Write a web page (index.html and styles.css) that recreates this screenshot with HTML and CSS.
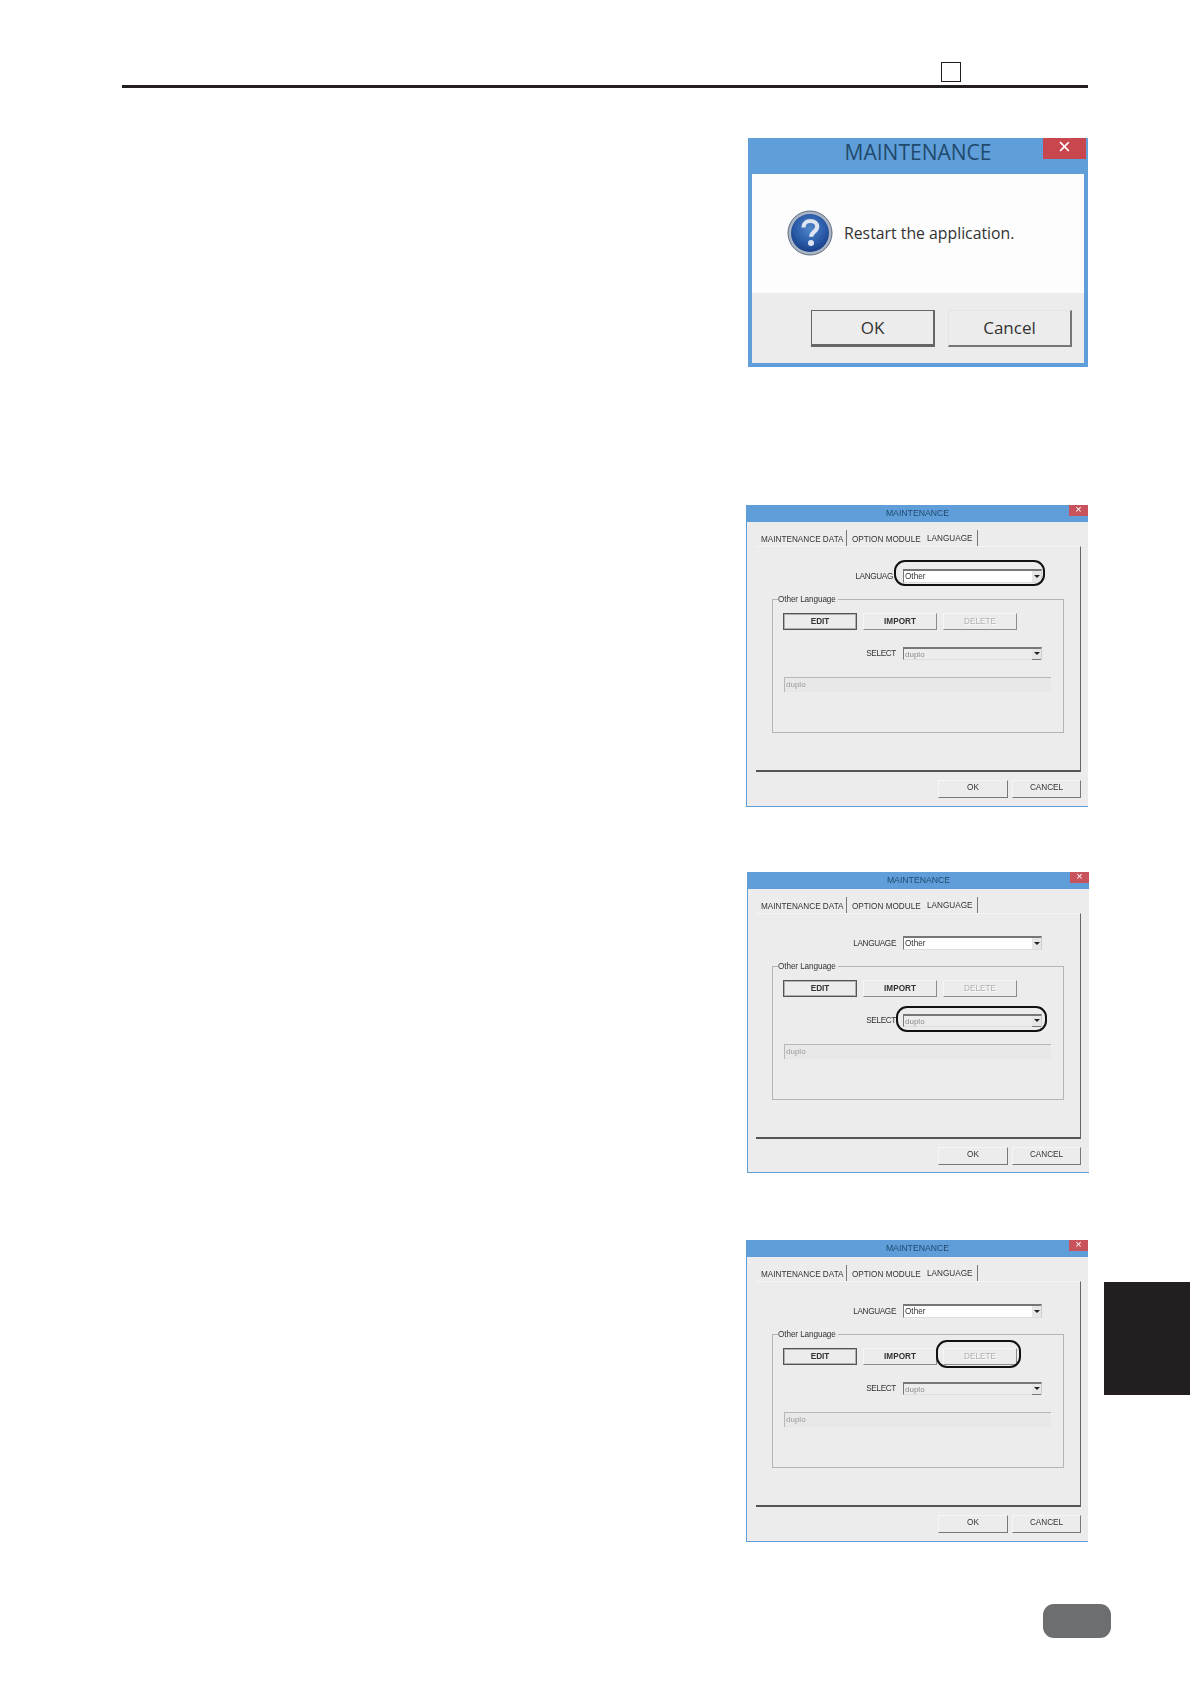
FILE: index.html
```html
<!DOCTYPE html>
<html lang="en">

<head>
  <meta charset="UTF-8" />
  <meta name="viewport" content="width=device-width, initial-scale=1.0" />
  <title>MAINTENANCE - language</title>
  <link rel="stylesheet" href="styles.css">
</head>

<body>
  <div class="page">
    <div class="page-head">
      <span class="head-box"></span>
    </div>

    <div class="shots">
      <!-- restart prompt -->
      <div class="msg-dialog">
        <div class="msg-title">MAINTENANCE<span class="msg-close">×</span></div>
        <div class="msg-body">
          <svg class="msg-icon" width="46" height="46" viewBox="0 0 46 46">
            <defs>
              <radialGradient id="qblue" cx="50%" cy="38%" r="62%">
                <stop offset="0" stop-color="#4f86c9" />
                <stop offset="0.65" stop-color="#2a5aa8" />
                <stop offset="1" stop-color="#173f86" />
              </radialGradient>
            </defs>
            <circle cx="23" cy="23" r="22" fill="#a9b4c4" stroke="#5e6d82" stroke-width="1" />
            <circle cx="23" cy="23" r="19" fill="url(#qblue)" />
            <path d="M16.5 17.5c0-4 3-6.500 6.800-6.500 4 0 6.900 2.400 6.900 5.800 0 4.800-6 5-6 10" fill="none" stroke="#dfe6f1" stroke-width="4.200" />
            <circle cx="24" cy="33" r="3" fill="#dfe6f1" />
          </svg>
          <span class="msg-text">Restart the application.</span>
        </div>
        <div class="msg-foot">
          <div class="msg-btn default">OK</div>
          <div class="msg-btn">Cancel</div>
        </div>
      </div>

      <!-- step: LANGUAGE combo marked -->
      <div class="dialog dialog-a">
        <div class="title">MAINTENANCE<span class="close">×</span></div>
        <div class="tabs">
          <span class="tab tab-data">MAINTENANCE DATA</span>
          <span class="tab tab-option">OPTION MODULE</span>
          <span class="tab tab-lang">LANGUAGE</span>
        </div>
        <div class="panel">
          <div class="field-row lang-row">
            <span class="field-label label-cut">LANGUAG</span>
            <div class="combo"><span>Other</span><i class="combo-arrow"></i></div>
          </div>
          <div class="group">
            <span class="legend">Other Language</span>
            <div class="btn-row">
              <div class="btn btn-default">EDIT</div>
              <div class="btn">IMPORT</div>
              <div class="btn btn-off">DELETE</div>
            </div>
            <div class="field-row select-row">
              <span class="field-label">SELECT</span>
              <div class="combo combo-off"><span>duplo</span><i class="combo-arrow"></i></div>
            </div>
            <div class="name-input">duplo</div>
          </div>
        </div>
        <div class="foot">
          <div class="foot-btn">OK</div>
          <div class="foot-btn">CANCEL</div>
        </div>
        <span class="mark mark-lang"></span>
      </div>

      <!-- step: SELECT combo marked -->
      <div class="dialog dialog-b">
        <div class="title">MAINTENANCE<span class="close">×</span></div>
        <div class="tabs">
          <span class="tab tab-data">MAINTENANCE DATA</span>
          <span class="tab tab-option">OPTION MODULE</span>
          <span class="tab tab-lang">LANGUAGE</span>
        </div>
        <div class="panel">
          <div class="field-row lang-row">
            <span class="field-label">LANGUAGE</span>
            <div class="combo"><span>Other</span><i class="combo-arrow"></i></div>
          </div>
          <div class="group">
            <span class="legend">Other Language</span>
            <div class="btn-row">
              <div class="btn btn-default">EDIT</div>
              <div class="btn">IMPORT</div>
              <div class="btn btn-off">DELETE</div>
            </div>
            <div class="field-row select-row">
              <span class="field-label">SELECT</span>
              <div class="combo combo-off"><span>duplo</span><i class="combo-arrow"></i></div>
            </div>
            <div class="name-input">duplo</div>
          </div>
        </div>
        <div class="foot">
          <div class="foot-btn">OK</div>
          <div class="foot-btn">CANCEL</div>
        </div>
        <span class="mark mark-select"></span>
      </div>

      <!-- step: DELETE button marked -->
      <div class="dialog dialog-c">
        <div class="title">MAINTENANCE<span class="close">×</span></div>
        <div class="tabs">
          <span class="tab tab-data">MAINTENANCE DATA</span>
          <span class="tab tab-option">OPTION MODULE</span>
          <span class="tab tab-lang">LANGUAGE</span>
        </div>
        <div class="panel">
          <div class="field-row lang-row">
            <span class="field-label">LANGUAGE</span>
            <div class="combo"><span>Other</span><i class="combo-arrow"></i></div>
          </div>
          <div class="group">
            <span class="legend">Other Language</span>
            <div class="btn-row">
              <div class="btn btn-default">EDIT</div>
              <div class="btn">IMPORT</div>
              <div class="btn btn-off">DELETE</div>
            </div>
            <div class="field-row select-row">
              <span class="field-label">SELECT</span>
              <div class="combo combo-off"><span>duplo</span><i class="combo-arrow"></i></div>
            </div>
            <div class="name-input">duplo</div>
          </div>
        </div>
        <div class="foot">
          <div class="foot-btn">OK</div>
          <div class="foot-btn">CANCEL</div>
        </div>
        <span class="mark mark-delete"></span>
      </div>
    </div>

    <div class="page-foot">
      <span class="page-pill"></span>
    </div>

    <div class="side-tab"></div>
  </div>
</body>

</html>
```

FILE: styles.css
```css
* {
  margin: 0;
  padding: 0;
  box-sizing: border-box;
}

body {
  background: #fff;
  font-family: "Liberation Sans", Arial, sans-serif;
}

.page {
  position: relative;
  height: 1684px;
  padding-top: 62px;
}

.page-head {
  width: 966px;
  margin-left: 122px;
  padding: 0 0 3px 819px;
  border-bottom: 3px solid #231f20;
}

.head-box {
  display: block;
  width: 20px;
  height: 20px;
  border: 1px solid #231f20;
}

.shots {
  width: 1088px;
  display: flex;
  flex-direction: column;
  align-items: flex-end;
}

/* first dialog, big one */
.msg-dialog {
  width: 340px;
  height: 229px;
  margin-top: 50px;
  border: 4px solid #5f9ed8;
  border-top: 0;
  background: #ececec;
  position: relative;
  filter: blur(0.4px);
}

.msg-title {
  height: 36px;
  margin: 0 -4px;
  background: #5f9ed8;
  color: #1f4a6e;
  font-family: "Open Sans", sans-serif;
  font-size: 21px;
  line-height: 28px;
  text-align: center;
}

.msg-close {
  position: absolute;
  top: 0;
  right: -2px;
  width: 43px;
  height: 21px;
  background: #c8474f;
  color: #fff;
  font-family: "Liberation Sans", sans-serif;
  font-size: 22px;
  line-height: 18px;
}

.msg-body {
  height: 119px;
  padding-left: 35px;
  padding-bottom: 1px;
  display: flex;
  align-items: center;
  gap: 11px;
  background: #fdfdfd;
}

.msg-text {
  font-family: "Open Sans", sans-serif;
  font-size: 15.800px;
  color: #333;
}

.msg-foot {
  height: 70px;
  padding: 17px 12px 0 0;
  display: flex;
  justify-content: flex-end;
  gap: 13px;
}

.msg-btn {
  width: 124px;
  height: 37px;
  border: 1px solid #e4e4e4;
  border-right: 2px solid #777;
  border-bottom: 2px solid #777;
  font-family: "Open Sans", sans-serif;
  font-size: 17px;
  line-height: 33px;
  text-align: center;
  color: #333;
}

.msg-btn.default {
  border: 1px solid #666;
  border-right-width: 2px;
  border-bottom-width: 3px;
}

/* language dialogs */
.dialog {
  width: 342px;
  height: 302px;
  border-left: 1px solid #5f9ed8;
  border-bottom: 1px solid #5f9ed8;
  background: #ececec;
  position: relative;
  font-size: 8.200px;
  color: #333;
  filter: blur(0.4px);
}

.dialog-a {
  margin-top: 138px;
}

/* this shot is one px off to the right, its contents are not */
.dialog-b {
  height: 301px;
  margin-top: 65px;
  margin-right: -1px;
}

.dialog-b .tabs,
.dialog-b .panel,
.dialog-b .foot {
  position: relative;
  left: -1px;
}

.dialog-c {
  margin-top: 67px;
}

.title {
  height: 17px;
  background: #5f9ed8;
  color: #1f4a6e;
  font-size: 8.700px;
  line-height: 17px;
  text-align: center;
}

.close {
  position: absolute;
  top: 0;
  right: 0;
  width: 19px;
  height: 11px;
  background: #c8535c;
  color: #fff;
  font-size: 11px;
  line-height: 9px;
}

.tabs {
  height: 16px;
  margin: 8px 0 0 14px;
  display: flex;
  line-height: 19px;
  white-space: nowrap;
}

.tab-data {
  width: 86px;
  border-right: 1px solid #777;
}

.tab-option {
  width: 76px;
  padding-left: 5px;
}

.tab-lang {
  width: 51px;
  margin-left: 4px;
  border-right: 1px solid #777;
  line-height: 17px;
}

.panel {
  width: 325px;
  height: 226px;
  margin-left: 9px;
  padding-top: 22px;
  border-top: 1px solid #f4f4f4;
  border-right: 1px solid #666;
  border-bottom: 2px solid #555;
}

.field-row {
  display: flex;
  align-items: center;
  justify-content: flex-end;
  gap: 7px;
}

.lang-row {
  width: 286px;
}

.field-label {
  white-space: nowrap;
  letter-spacing: -0.35px;
}

.label-cut {
  margin-right: 3px;
}

.combo {
  width: 139px;
  height: 14px;
  padding-left: 1px;
  display: flex;
  align-items: center;
  justify-content: space-between;
  background: #fff;
  border-top: 2px solid #777;
  border-left: 1px solid #777;
  border-right: 1px solid #ccc;
  border-bottom: 1px solid #ddd;
}

.combo-arrow {
  width: 9px;
  height: 11px;
  display: flex;
  align-items: center;
  justify-content: center;
  background: #e6e6e6;
}

.combo-arrow::after {
  content: "";
  border-left: 3px solid transparent;
  border-right: 3px solid transparent;
  border-top: 3px solid #222;
}

.combo-off {
  height: 13px;
  background: #ededed;
  color: #8a8a8a;
  font-size: 8px;
}

.combo-off .combo-arrow {
  border-bottom: 1px solid #777;
}

.group {
  width: 292px;
  height: 134px;
  margin: 16px 0 0 16px;
  border: 1px solid #b4b4b4;
  position: relative;
}

.legend {
  position: absolute;
  top: -5px;
  left: 5px;
  padding-right: 2px;
  background: #ececec;
  line-height: 10px;
  letter-spacing: -0.1px;
}

.btn-row {
  margin: 13px 0 0 10px;
  display: flex;
  gap: 6px;
}

.btn {
  width: 74px;
  height: 17px;
  border-top: 1px solid #f6f6f6;
  border-left: 1px solid #f6f6f6;
  border-right: 1px solid #8c8c8c;
  border-bottom: 1px solid #8c8c8c;
  font-weight: bold;
  line-height: 15px;
  text-align: center;
}

.btn-default {
  border: 1px solid #555;
  box-shadow: inset 0 0 0 1px #b0b0b0;
}

.btn-off {
  color: #b0b0b0;
  font-weight: normal;
  text-shadow: 1px 1px 0 #fafafa;
}

.select-row {
  width: 269px;
  margin: 17px 0 0 0;
}

.name-input {
  width: 267px;
  height: 15px;
  margin: 17px 0 0 11px;
  padding-left: 1px;
  background: #e8e8e8;
  border-top: 1px solid #b8b8b8;
  border-left: 1px solid #b8b8b8;
  color: #999;
  font-size: 8px;
  line-height: 13px;
}

.foot {
  width: 325px;
  margin: 8px 0 0 9px;
  display: flex;
  justify-content: flex-end;
  gap: 4px;
}

.foot-btn {
  width: 70px;
  height: 18px;
  border-top: 1px solid #f6f6f6;
  border-left: 1px solid #f6f6f6;
  border-right: 1px solid #777;
  border-bottom: 1px solid #777;
  line-height: 14px;
  text-align: center;
}

.foot-btn + .foot-btn {
  width: 69px;
}

/* hand-drawn black ovals over the controls */
.mark {
  position: absolute;
  border: 2.600px solid #111;
  border-radius: 11px;
}

.mark-lang {
  left: 147px;
  top: 55px;
  width: 151px;
  height: 26px;
}

.mark-select {
  left: 148px;
  top: 134px;
  width: 151px;
  height: 26px;
}

.mark-delete {
  left: 189px;
  top: 100px;
  width: 85px;
  height: 28px;
}

.page-foot {
  width: 1111px;
  margin-top: 62px;
  display: flex;
  justify-content: flex-end;
}

.page-pill {
  width: 68px;
  height: 34px;
  border-radius: 11px;
  background: #6d6e70;
}

.side-tab {
  position: absolute;
  top: 1282px;
  right: 0;
  width: 86px;
  height: 113px;
  background: #231f20;
}
```
